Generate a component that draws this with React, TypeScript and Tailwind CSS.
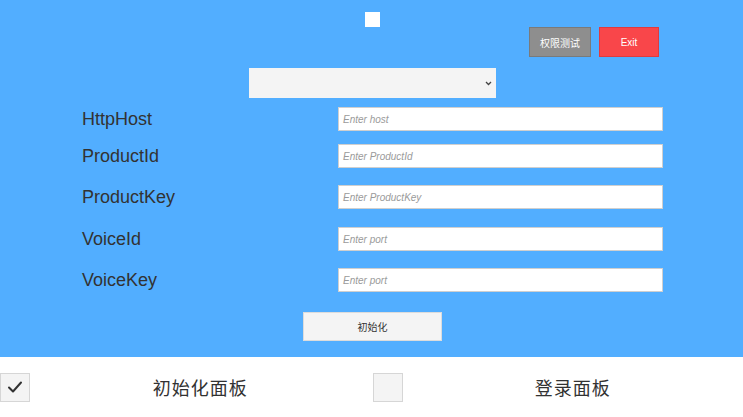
import React from 'react';

const fields = [
  { label: 'HttpHost', placeholder: 'Enter host', mt: 'mt-[9px]' },
  { label: 'ProductId', placeholder: 'Enter ProductId', mt: 'mt-[13px]' },
  { label: 'ProductKey', placeholder: 'Enter ProductKey', mt: 'mt-[17px]' },
  { label: 'VoiceId', placeholder: 'Enter port', mt: 'mt-[18px]' },
  { label: 'VoiceKey', placeholder: 'Enter port', mt: 'mt-[17px]' },
];

const Toggle = ({ checked, label }: { checked: boolean; label: string }) => (
  <div className="w-1/2 flex items-center">
    <div className="w-[30px] h-[29px] bg-[#f4f4f4] border border-[#d6d6d6] flex items-center justify-center shrink-0">
      {checked && (
        <svg width="18" height="18" viewBox="0 0 18 18" fill="none">
          <path d="M3 9.5 L7 13.5 L15 4.5" stroke="#323232" strokeWidth="2" strokeLinecap="round" strokeLinejoin="round" />
        </svg>
      )}
    </div>
    <div className="flex-1 text-center text-[18px] text-[#323232] tracking-[1px] font-['Noto_Sans_CJK_SC',sans-serif]">
      {label}
    </div>
  </div>
);

export default function App() {
  return (
    <div className="w-full h-[417px] bg-white font-['Liberation_Sans',Arial,sans-serif] overflow-hidden">
      <div className="h-[357px] bg-[#52aeff] flex flex-col">
        <div className="mt-[12px] ml-[365px] w-[15px] h-[15px] bg-white" />

        <div className="flex justify-end gap-[8px] pr-[84px]">
          <button className="w-[62px] h-[30px] bg-[#8e8e8e] border border-[#7a7a7a] text-white text-[10px] font-['Noto_Sans_CJK_SC',sans-serif]">
            权限测试
          </button>
          <button className="w-[60px] h-[30px] bg-[#f9464a] border border-[#e03a3e] text-white text-[10px]">
            Exit
          </button>
        </div>

        <div className="mt-[11px] ml-[249px] w-[247px] h-[30px] bg-[#f4f4f4] flex items-center justify-end pr-[4px]">
          <svg width="7" height="5" viewBox="0 0 7 5" fill="none">
            <path d="M1 1 L3.5 3.5 L6 1" stroke="#444" strokeWidth="1.3" />
          </svg>
        </div>

        {fields.map((f) => (
          <div key={f.label} className={`flex items-center ${f.mt}`}>
            <div className="w-[256px] pl-[82px] shrink-0 box-content text-[18px] text-[#323232] leading-none -mr-[82px]">
              {f.label}
            </div>
            <div className="ml-[82px] w-[325px] h-[24px] bg-white border border-[#cfcfcf] flex items-center pl-[4px] text-[10px] italic text-[#9a9a9a]">
              {f.placeholder}
            </div>
          </div>
        ))}

        <button className="mt-[20px] ml-[303px] w-[139px] h-[29px] bg-[#f4f4f4] border border-[#dcdcdc] text-[10px] text-[#323232] font-['Noto_Sans_CJK_SC',sans-serif]">
          初始化
        </button>
      </div>

      <div className="h-[60px] flex">
        <Toggle checked label="初始化面板" />
        <div className="w-[2px]" />
        <Toggle checked={false} label="登录面板" />
      </div>
    </div>
  );
}
